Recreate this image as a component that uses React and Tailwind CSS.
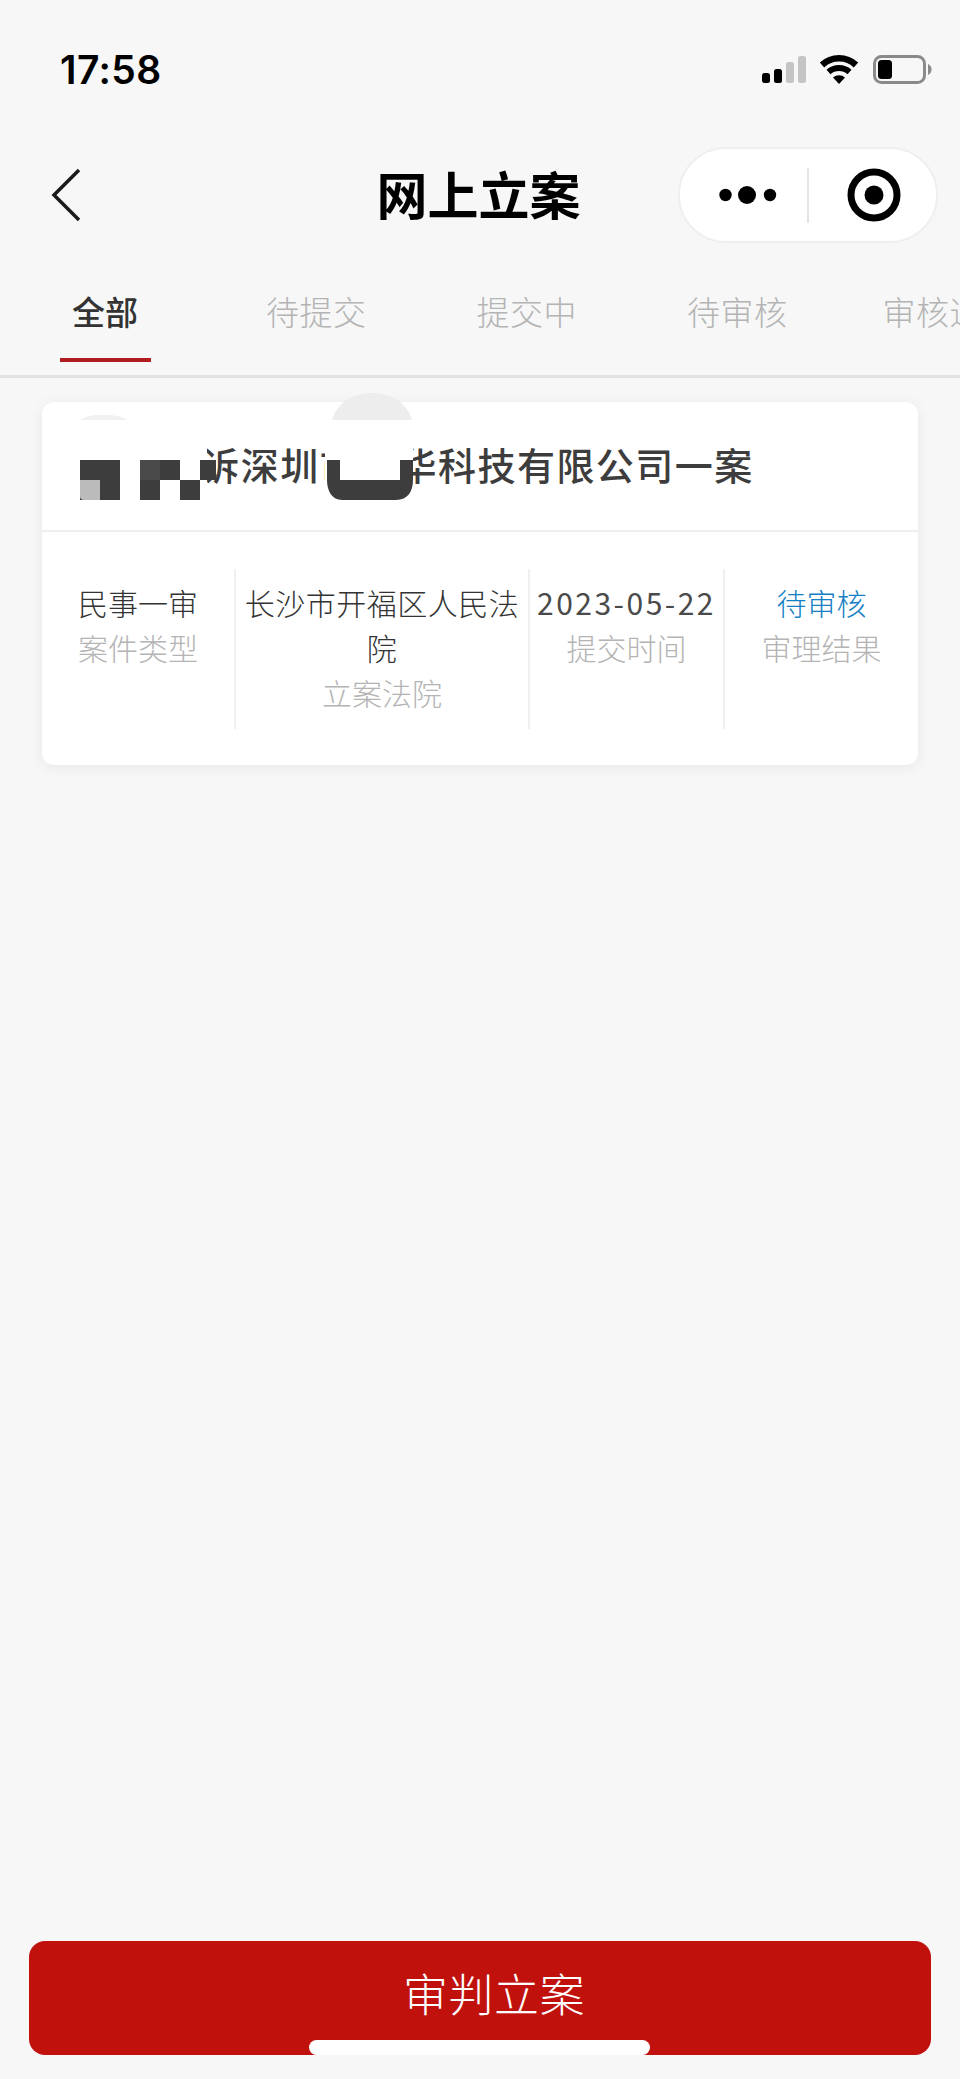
const tabs = [
  { label: "全部", cls: "w-[91px] pl-[12px] text-[#333333] font-medium", active: true },
  { label: "待提交", cls: "ml-[115px] tracking-[0.5px] font-light text-[#b4b4b4]" },
  { label: "提交中", cls: "ml-[110px] tracking-[0.5px] font-light text-[#b4b4b4]" },
  { label: "待审核", cls: "ml-[110px] tracking-[0.5px] font-light text-[#b4b4b4]" },
  { label: "审核通过", cls: "ml-[95px] tracking-[0.5px] font-light text-[#b4b4b4]" },
];

const columns = [
  { value: "民事一审", label: "案件类型", cls: "w-[194px] border-r-2", valueCls: "text-[#333333]" },
  { value: "长沙市开福区人民法院", label: "立案法院", cls: "w-[294px] border-r-2", valueCls: "text-[#333333] tracking-[0.5px]" },
  { value: "2023-05-22", label: "提交时间", cls: "w-[195px] border-r-2", valueCls: "font-normal text-[#4a4a4a] tracking-[2.5px]" },
  { value: "待审核", label: "审理结果", cls: "flex-1", valueCls: "text-[#1580c5]" },
];

function StatusIcons() {
  return (
    <svg width="172" height="32" viewBox="0 0 172 32" fill="none">
      {/* signal */}
      <rect x="2" y="19" width="8" height="10" rx="2.5" fill="#000" />
      <rect x="14" y="15" width="8" height="14" rx="2.5" fill="#000" />
      <rect x="26" y="8" width="8" height="21" rx="2.5" fill="#c4c4c4" />
      <rect x="38" y="2" width="8" height="27" rx="2.5" fill="#c4c4c4" />
      {/* wifi */}
      <path d="M62 11 A25 25 0 0 1 96 11" stroke="#000" strokeWidth="6.5" />
      <path d="M68.5 18 A16 16 0 0 1 89.5 18" stroke="#000" strokeWidth="6" />
      <path d="M73 23.5 A9 9 0 0 1 85 23.5 L79 30 Z" fill="#000" />
      {/* battery */}
      <rect x="114.5" y="2.5" width="50" height="26" rx="7" stroke="#8a8a8a" strokeWidth="3" />
      <rect x="118" y="6" width="14" height="19" rx="3.5" fill="#000" />
      <path d="M168 10 C170.5 11 171.5 13 171.5 15.5 C171.5 18 170.5 20 168 21 Z" fill="#8a8a8a" />
    </svg>
  );
}

// the blotted-out names on the case title, painted over the text
function TitleMosaic() {
  return (
    <svg className="absolute left-[38px] top-[-9px]" width="334" height="107" viewBox="0 0 334 107">
      <path d="M0 27 C8 20 38 20 47 27 Z" fill="#f1f1f1" />
      <path d="M252 27 C262 -9 322 -9 332 27 Z" fill="#ededed" />
      <rect x="0" y="27" width="127" height="80" fill="#fff" />
      <rect x="245" y="27" width="88" height="80" fill="#fff" />
      <rect x="0" y="67" width="40" height="40" fill="#3d3d3d" />
      <path d="M0 87 H20 V107 H4 Q0 107 0 103 Z" fill="#bbbbbb" />
      <rect x="60" y="67" width="20" height="20" fill="#4a4a4a" />
      <rect x="80" y="67" width="20" height="20" fill="#3d3d3d" />
      <rect x="60" y="87" width="20" height="20" fill="#3d3d3d" />
      <rect x="100" y="87" width="20" height="20" fill="#3d3d3d" />
      <rect x="120" y="67" width="16" height="20" fill="#3d3d3d" />
      <path d="M247 67 H260 V87 H320 V67 H333 V87 C333 98 328 107 316 107 H262 C252 107 247 98 247 87 Z" fill="#3d3d3d" />
    </svg>
  );
}

export default function App() {
  return (
    <div className="w-[960px] h-[2079px] bg-[#f7f7f7] flex flex-col overflow-hidden font-['Noto_Sans_CJK_SC','Liberation_Sans',sans-serif]">
      {/* status bar */}
      <div className="h-[147px] pt-[47px] pl-[60px] pr-[28px] flex items-start justify-between">
        <span className="font-['Inter',sans-serif] text-[39px] leading-[46px] font-semibold tracking-[0.4px] text-black">17:58</span>
        <div className="mt-[7px]">
          <StatusIcons />
        </div>
      </div>

      {/* nav */}
      <div className="h-[96px] px-[22px] grid grid-cols-[1fr_auto_1fr] items-center">
        <svg className="ml-[28px]" width="32" height="54" viewBox="0 0 32 54" fill="none">
          <path d="M29 2 L4 27 L29 52" stroke="#1a1a1a" strokeWidth="3.5" />
        </svg>
        <h1 className="text-[51px] leading-[60px] font-bold text-black mb-[5px] mr-[3px]">网上立案</h1>
        <div className="justify-self-end w-[260px] h-[96px] rounded-[48px] bg-white border-2 border-[#efefef] flex items-center">
          <svg className="ml-[39px]" width="58" height="20" viewBox="0 0 58 20">
            <circle cx="6.5" cy="10" r="6.2" fill="#000" />
            <circle cx="28" cy="10" r="9" fill="#000" />
            <circle cx="51" cy="10" r="6.2" fill="#000" />
          </svg>
          <div className="ml-[30px] w-[2px] h-[55px] bg-[#e4e4e4]" />
          <svg className="ml-[38px]" width="54" height="54" viewBox="0 0 54 54" fill="none">
            <circle cx="27" cy="27" r="23" stroke="#000" strokeWidth="7" />
            <circle cx="27" cy="27" r="9.5" fill="#000" />
          </svg>
        </div>
      </div>

      {/* tabs */}
      <div className="h-[135px] shrink-0 border-b-[3px] border-[#e1e1e1] pl-[60px] flex overflow-hidden">
        {tabs.map((tab) => (
          <div key={tab.label} className={`shrink-0 pt-[46px] text-[33px] leading-[44px] ${tab.cls}`}>
            {tab.label}
            {tab.active && <div className="mt-[25px] -ml-[12px] w-[91px] h-[4px] bg-[#b01c20]" />}
          </div>
        ))}
      </div>

      {/* case card */}
      <div className="mt-[24px] mx-[42px] rounded-[12px] bg-white shadow-[0_2px_14px_rgba(0,0,0,0.07)] relative">
        <div className="h-[130px] pl-[41px] border-b-2 border-[#efefef] flex items-center">
          <span className="mb-[4px] text-[38px] leading-[50px] font-medium tracking-[1.45px] text-[#3d3d3d] whitespace-nowrap">
            某某某诉深圳市某华科技有限公司一案
          </span>
        </div>

        <TitleMosaic />

        <div className="pt-[37px] pb-[36px] flex">
          {columns.map((col) => (
            <div
              key={col.label}
              className={`h-[160px] px-[6px] pt-[11px] border-[#f0f0f0] text-center text-[30px] leading-[45px] font-light ${col.cls}`}
            >
              <div className={col.valueCls}>{col.value}</div>
              <div className="text-[#b4b4b4]">{col.label}</div>
            </div>
          ))}
        </div>
      </div>

      {/* bottom button */}
      <div className="mt-auto mb-[24px] mx-[29px] h-[114px] rounded-[16px] bg-[#c1110d] relative flex justify-center pt-[22px] pl-[28px]">
        <span className="text-[45px] leading-[60px] font-light tracking-[0.5px] text-white">审判立案</span>
        {/* home indicator */}
        <div className="absolute left-[280px] bottom-0 w-[341px] h-[15px] rounded-[8px] bg-white" />
      </div>
    </div>
  );
}
